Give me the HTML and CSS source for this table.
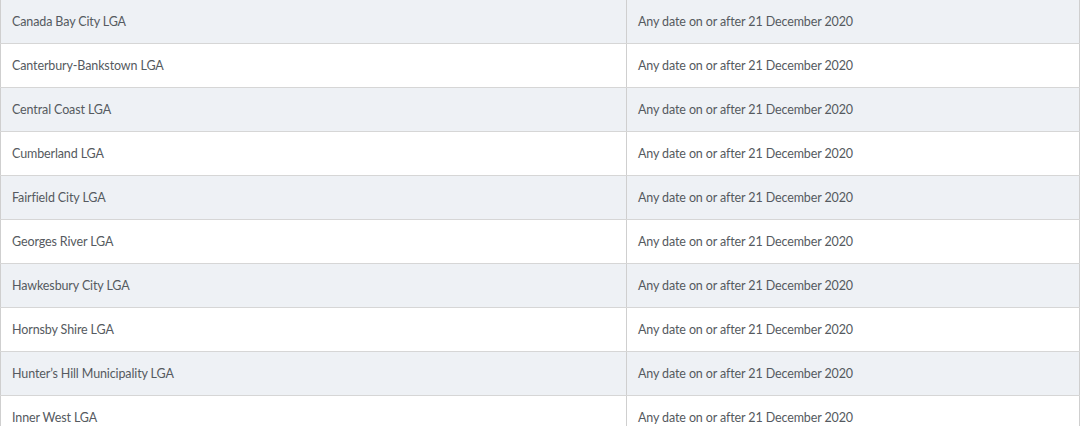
FILE: index.html
```html
<!DOCTYPE html>
<html>
<head>
<meta charset="utf-8">
<link rel="stylesheet" href="styles.css">
</head>
<body>
<table class="lga-table">
  <tbody>
    <tr><td class="name">Canada Bay City LGA</td><td class="date">Any date on or after 21 December 2020</td></tr>
    <tr><td class="name">Canterbury-Bankstown LGA</td><td class="date">Any date on or after 21 December 2020</td></tr>
    <tr><td class="name">Central Coast LGA</td><td class="date">Any date on or after 21 December 2020</td></tr>
    <tr><td class="name">Cumberland LGA</td><td class="date">Any date on or after 21 December 2020</td></tr>
    <tr><td class="name">Fairfield City LGA</td><td class="date">Any date on or after 21 December 2020</td></tr>
    <tr><td class="name">Georges River LGA</td><td class="date">Any date on or after 21 December 2020</td></tr>
    <tr><td class="name">Hawkesbury City LGA</td><td class="date">Any date on or after 21 December 2020</td></tr>
    <tr><td class="name">Hornsby Shire LGA</td><td class="date">Any date on or after 21 December 2020</td></tr>
    <tr><td class="name">Hunter’s Hill Municipality LGA</td><td class="date">Any date on or after 21 December 2020</td></tr>
    <tr><td class="name">Inner West LGA</td><td class="date">Any date on or after 21 December 2020</td></tr>
  </tbody>
</table>
</body>
</html>
```
FILE: styles.css
```css
html, body {
  margin: 0;
  padding: 0;
  background: #ffffff;
  overflow: hidden;
}
.lga-table {
  width: 1080px;
  margin-top: -1px;
  border-collapse: collapse;
  table-layout: fixed;
  font-family: Lato, "Open Sans", sans-serif;
  font-size: 12.5px;
  letter-spacing: -0.12px;
  color: #555a60;
}
.lga-table tr:nth-child(odd) {
  background: #eef1f5;
}
.lga-table tr:nth-child(even) {
  background: #ffffff;
}
.lga-table td {
  height: 44px;
  padding: 0 11px;
  border-top: 1px solid #d6d6d6;
  border-left: 1px solid #cfcfcf;
  border-right: 1px solid #cfcfcf;
  border-bottom: 1px solid #d6d6d6;
  box-sizing: border-box;
  vertical-align: middle;
}
.lga-table td.name {
  width: 626px;
}
```
